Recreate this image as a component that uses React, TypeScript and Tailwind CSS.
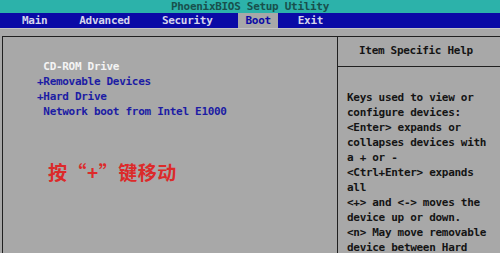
const MENU = [
  { label: 'Main', ml: 'ml-[15px]' },
  { label: 'Advanced', ml: 'ml-[18px]' },
  { label: 'Security', ml: 'ml-[18px]' },
  { label: 'Boot', ml: 'ml-[19px]', active: true },
  { label: 'Exit', ml: 'ml-[13px]' },
]

const BOOT_ORDER = [
  { text: ' CD-ROM Drive', selected: true },
  { text: '+Removable Devices' },
  { text: '+Hard Drive' },
  { text: ' Network boot from Intel E1000' },
]

const HELP = [
  'Keys used to view or',
  'configure devices:',
  '<Enter> expands or',
  'collapses devices with',
  'a + or -',
  '<Ctrl+Enter> expands',
  'all',
  '<+> and <-> moves the',
  'device up or down.',
  '<n> May move removable',
  'device between Hard',
]

// PhoenixBIOS boot tab — fixed 500x253 shot, so sizes are pixel-exact
export default function App() {
  return (
    <div className="w-[500px] h-[253px] overflow-hidden bg-[#a8a8a8] flex flex-col font-['DejaVu_Sans_Mono','Liberation_Mono',monospace] font-bold text-[11px] tracking-[-0.3px]">
      {/* title */}
      <div className="h-[13px] shrink-0 bg-[#2cb2aa] text-center leading-[13px] text-[#18504c]">
        PhoenixBIOS Setup Utility
      </div>

      {/* menu bar */}
      <div className="h-[15px] shrink-0 bg-[#0a0aa6] flex items-stretch">
        {MENU.map((m) => (
          <span
            key={m.label}
            className={`${m.ml} px-[7px] leading-[15px] ${
              m.active ? 'bg-[#a8a8a8] text-[#0a0aa6]' : 'text-[#d4d4ec]'
            }`}
          >
            {m.label}
          </span>
        ))}
      </div>

      <div className="h-[8px] shrink-0 border-t border-[#c4c4c4]" />

      {/* main panel */}
      <div className="flex-1 ml-[2px] flex border-t border-l border-[#202020] min-h-0">
        <div className="w-[335px] shrink-0 border-r border-[#202020] flex flex-col pt-[22px] pl-[34px]">
          {BOOT_ORDER.map((b) => (
            <div
              key={b.text}
              className={`whitespace-pre leading-[15px] ${
                b.selected ? 'text-[#f4f4f4]' : 'text-[#1c1ca4]'
              }`}
            >
              {b.text}
            </div>
          ))}
          <div className="mt-[41px] ml-[11px] text-[19px] font-bold tracking-[0.5px] text-[#dc2a2a] font-['Noto_Sans_CJK_SC',sans-serif] leading-[24px]">
            按“+”键移动
          </div>
        </div>

        <div className="flex-1 flex flex-col text-[#141414]">
          <div className="h-[30px] shrink-0 border-b border-[#202020] flex items-center pl-[21px]">
            Item Specific Help
          </div>
          <div className="pt-[23px] pl-[9px] flex flex-col">
            {HELP.map((line) => (
              <div key={line} className="whitespace-pre leading-[15px]">
                {line}
              </div>
            ))}
          </div>
        </div>
      </div>
    </div>
  )
}
